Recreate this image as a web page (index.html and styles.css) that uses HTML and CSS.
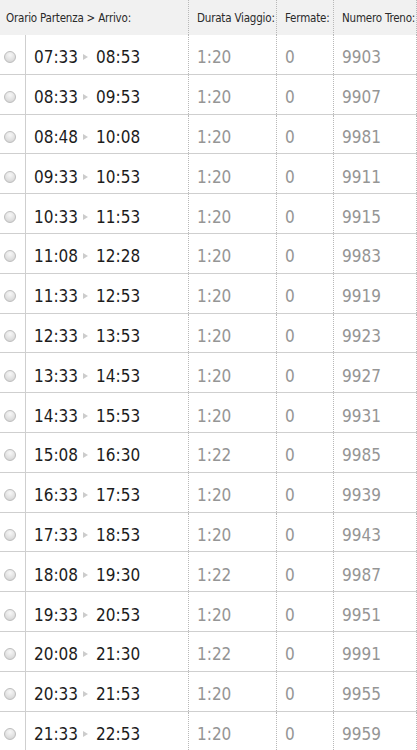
FILE: index.html
```html
<!DOCTYPE html>
<html lang="it">
<head>
<meta charset="utf-8">
<title>Orari treni</title>
<link rel="stylesheet" href="styles.css">
</head>
<body>
<div class="timetable">
  <div class="row head">
    <div class="cell c-route">Orario Partenza &gt; Arrivo:</div>
    <div class="cell c-dur">Durata Viaggio:</div>
    <div class="cell c-stop">Fermate:</div>
    <div class="cell c-num">Numero Treno:</div>
  </div>
  <div class="row"><div class="cell c-radio"><span class="radio"></span></div><div class="cell c-time">07:33<span class="arrow"></span>08:53</div><div class="cell c-dur">1:20</div><div class="cell c-stop">0</div><div class="cell c-num">9903</div></div>
  <div class="row"><div class="cell c-radio"><span class="radio"></span></div><div class="cell c-time">08:33<span class="arrow"></span>09:53</div><div class="cell c-dur">1:20</div><div class="cell c-stop">0</div><div class="cell c-num">9907</div></div>
  <div class="row"><div class="cell c-radio"><span class="radio"></span></div><div class="cell c-time">08:48<span class="arrow"></span>10:08</div><div class="cell c-dur">1:20</div><div class="cell c-stop">0</div><div class="cell c-num">9981</div></div>
  <div class="row"><div class="cell c-radio"><span class="radio"></span></div><div class="cell c-time">09:33<span class="arrow"></span>10:53</div><div class="cell c-dur">1:20</div><div class="cell c-stop">0</div><div class="cell c-num">9911</div></div>
  <div class="row"><div class="cell c-radio"><span class="radio"></span></div><div class="cell c-time">10:33<span class="arrow"></span>11:53</div><div class="cell c-dur">1:20</div><div class="cell c-stop">0</div><div class="cell c-num">9915</div></div>
  <div class="row"><div class="cell c-radio"><span class="radio"></span></div><div class="cell c-time">11:08<span class="arrow"></span>12:28</div><div class="cell c-dur">1:20</div><div class="cell c-stop">0</div><div class="cell c-num">9983</div></div>
  <div class="row"><div class="cell c-radio"><span class="radio"></span></div><div class="cell c-time">11:33<span class="arrow"></span>12:53</div><div class="cell c-dur">1:20</div><div class="cell c-stop">0</div><div class="cell c-num">9919</div></div>
  <div class="row"><div class="cell c-radio"><span class="radio"></span></div><div class="cell c-time">12:33<span class="arrow"></span>13:53</div><div class="cell c-dur">1:20</div><div class="cell c-stop">0</div><div class="cell c-num">9923</div></div>
  <div class="row"><div class="cell c-radio"><span class="radio"></span></div><div class="cell c-time">13:33<span class="arrow"></span>14:53</div><div class="cell c-dur">1:20</div><div class="cell c-stop">0</div><div class="cell c-num">9927</div></div>
  <div class="row"><div class="cell c-radio"><span class="radio"></span></div><div class="cell c-time">14:33<span class="arrow"></span>15:53</div><div class="cell c-dur">1:20</div><div class="cell c-stop">0</div><div class="cell c-num">9931</div></div>
  <div class="row"><div class="cell c-radio"><span class="radio"></span></div><div class="cell c-time">15:08<span class="arrow"></span>16:30</div><div class="cell c-dur">1:22</div><div class="cell c-stop">0</div><div class="cell c-num">9985</div></div>
  <div class="row"><div class="cell c-radio"><span class="radio"></span></div><div class="cell c-time">16:33<span class="arrow"></span>17:53</div><div class="cell c-dur">1:20</div><div class="cell c-stop">0</div><div class="cell c-num">9939</div></div>
  <div class="row"><div class="cell c-radio"><span class="radio"></span></div><div class="cell c-time">17:33<span class="arrow"></span>18:53</div><div class="cell c-dur">1:20</div><div class="cell c-stop">0</div><div class="cell c-num">9943</div></div>
  <div class="row"><div class="cell c-radio"><span class="radio"></span></div><div class="cell c-time">18:08<span class="arrow"></span>19:30</div><div class="cell c-dur">1:22</div><div class="cell c-stop">0</div><div class="cell c-num">9987</div></div>
  <div class="row"><div class="cell c-radio"><span class="radio"></span></div><div class="cell c-time">19:33<span class="arrow"></span>20:53</div><div class="cell c-dur">1:20</div><div class="cell c-stop">0</div><div class="cell c-num">9951</div></div>
  <div class="row"><div class="cell c-radio"><span class="radio"></span></div><div class="cell c-time">20:08<span class="arrow"></span>21:30</div><div class="cell c-dur">1:22</div><div class="cell c-stop">0</div><div class="cell c-num">9991</div></div>
  <div class="row"><div class="cell c-radio"><span class="radio"></span></div><div class="cell c-time">20:33<span class="arrow"></span>21:53</div><div class="cell c-dur">1:20</div><div class="cell c-stop">0</div><div class="cell c-num">9955</div></div>
  <div class="row"><div class="cell c-radio"><span class="radio"></span></div><div class="cell c-time">21:33<span class="arrow"></span>22:53</div><div class="cell c-dur">1:20</div><div class="cell c-stop">0</div><div class="cell c-num">9959</div></div>
</div>
</body>
</html>
```
FILE: styles.css
```css
html, body {
  margin: 0;
  padding: 0;
  background: #ffffff;
}
body {
  font-family: "DejaVu Sans Condensed", "DejaVu Sans", sans-serif;
  color: #222;
  overflow: hidden;
}
.timetable {
  width: 417px;
}
.row {
  display: grid;
  grid-template-columns: 26px 163px 88px 57px 83px;
  height: 39.8px;
  box-sizing: border-box;
  border-bottom: 1px solid #cfcfcf;
}
.row.head {
  grid-template-columns: 189px 88px 57px 83px;
  height: 35px;
  background: #f1f1f1;
  border-bottom: none;
}
.cell {
  box-sizing: border-box;
  display: flex;
  align-items: center;
  white-space: nowrap;
  padding-top: 6px;
}
.head .cell {
  font-size: 11.5px;
  color: #2a2a2a;
  padding: 0 0 0 8px;
  border-right: 1px dotted #b8b8b8;
  letter-spacing: -0.2px;
}
.head .c-route {
  padding-left: 6px;
}
.c-radio {
  border-right: 1px solid #cfcfcf;
  padding-left: 4px;
}
.radio {
  width: 12px;
  height: 12px;
  border-radius: 50%;
  box-sizing: border-box;
  border: 1px solid #bdbdbd;
  background: radial-gradient(circle at 50% 30%, #f7f7f7 0%, #e2e2e2 55%, #cdcdcd 100%);
}
.c-time {
  padding-left: 8px;
  font-size: 17px;
  color: #1c1c1c;
  border-right: 1px dotted #b8b8b8;
}
.arrow {
  display: inline-block;
  width: 0;
  height: 0;
  border-top: 3px solid transparent;
  border-bottom: 3px solid transparent;
  border-left: 5px solid #cccccc;
  margin: 0 8px 0 5px;
}
.c-dur, .c-stop, .c-num {
  padding-left: 8px;
  font-size: 17px;
  color: #959595;
  border-right: 1px dotted #b8b8b8;
}
```
